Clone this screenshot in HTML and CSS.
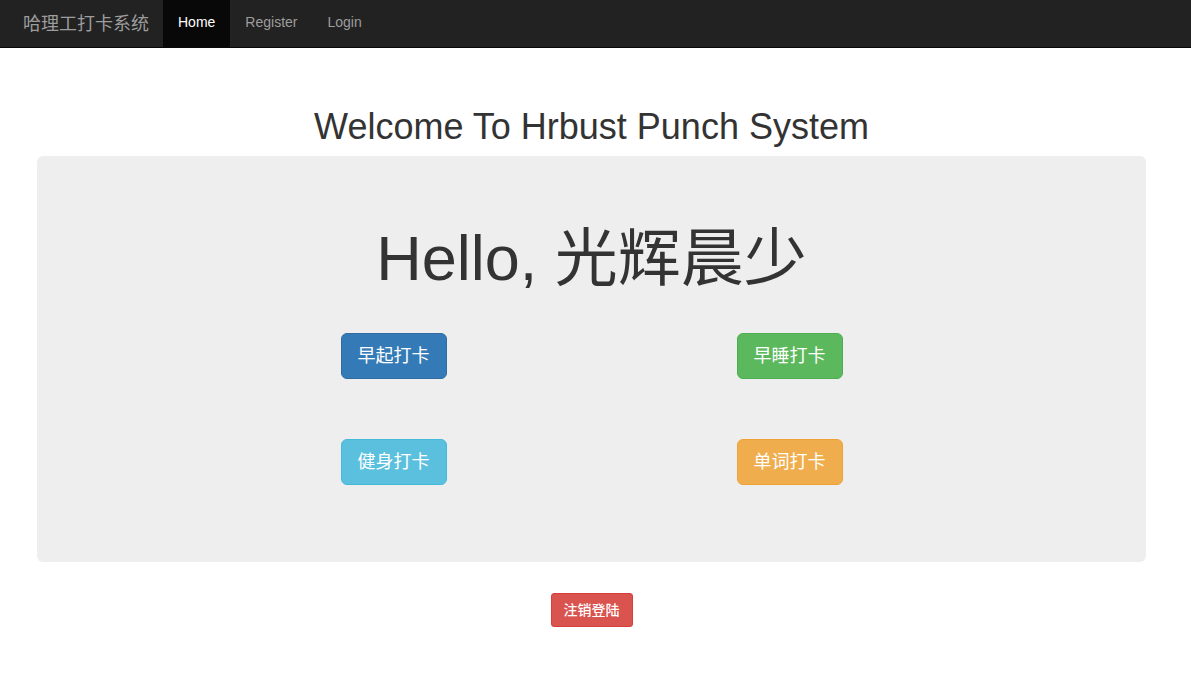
FILE: index.html
```html
<!DOCTYPE html>
<html lang="zh-CN">
<head>
<meta charset="utf-8">
<title>哈理工打卡系统</title>
<link rel="stylesheet" href="styles.css">
</head>
<body>
<nav class="navbar">
  <a class="brand" href="#">哈理工打卡系统</a>
  <ul class="nav">
    <li><a class="active" href="#">Home</a></li>
    <li><a href="#">Register</a></li>
    <li><a href="#">Login</a></li>
  </ul>
</nav>
<main class="container">
  <h1 class="title">Welcome To Hrbust Punch System</h1>
  <section class="jumbotron">
    <h1 class="hello">Hello, 光辉晨少</h1>
    <div class="grid">
      <div class="cell"><a class="btn btn-lg btn-primary" href="#">早起打卡</a></div>
      <div class="cell"><a class="btn btn-lg btn-success" href="#">早睡打卡</a></div>
      <div class="cell"><a class="btn btn-lg btn-info" href="#">健身打卡</a></div>
      <div class="cell"><a class="btn btn-lg btn-warning" href="#">单词打卡</a></div>
    </div>
  </section>
  <div class="logout">
    <a class="btn btn-sm btn-danger" href="#">注销登陆</a>
  </div>
</main>
</body>
</html>
```
FILE: styles.css
```css
* { box-sizing: border-box; }
html, body { margin: 0; padding: 0; }
body {
  font-family: "Liberation Sans", Arial, "Noto Sans CJK SC", sans-serif;
  font-size: 14px;
  line-height: 20px;
  color: #333;
  background: #fff;
}
a { text-decoration: none; }

.navbar {
  display: flex;
  align-items: stretch;
  height: 48px;
  background: #222;
  border-bottom: 1px solid #080808;
  padding-left: 8px;
}
.brand {
  display: flex;
  align-items: center;
  padding: 0 14px 0 15px;
  font-size: 18px;
  color: #9d9d9d;
}
.nav {
  display: flex;
  list-style: none;
  margin: 0;
  padding: 0;
}
.nav li { display: flex; }
.nav a {
  display: flex;
  align-items: center;
  padding: 0 15px 3px;
  color: #9d9d9d;
  font-size: 14px;
}
.nav a.active {
  background: #080808;
  color: #fff;
}

.container {
  width: 1109px;
  margin: 0 0 0 37px;
}
.title {
  margin: 59px 0 9px;
  font-size: 36px;
  font-weight: 400;
  line-height: 39.6px;
  text-align: center;
  color: #333;
}
.jumbotron {
  background: #eee;
  border-radius: 6px;
  padding: 48px 0 77px;
  height: 406px;
}
.hello {
  margin: 20px 0 40px;
  font-size: 63px;
  font-weight: 400;
  line-height: 69px;
  text-align: center;
}
.grid {
  display: grid;
  grid-template-columns: 396px 396px;
  justify-content: center;
  row-gap: 60px;
}
.cell {
  display: flex;
  justify-content: center;
}
.btn {
  display: inline-block;
  border: 1px solid transparent;
  color: #fff;
  text-align: center;
  white-space: nowrap;
}
.btn-lg {
  padding: 10px 16px;
  font-size: 18px;
  line-height: 24px;
  border-radius: 6px;
}
.btn-sm {
  padding: 6px 12px;
  font-size: 14px;
  line-height: 20px;
  font-weight: 500;
  border-radius: 3px;
}
.btn-primary { background: #337ab7; border-color: #2e6da4; }
.btn-success { background: #5cb85c; border-color: #4cae4c; }
.btn-info { background: #5bc0de; border-color: #46b8da; }
.btn-warning { background: #f0ad4e; border-color: #eea236; }
.btn-danger { background: #d9534f; border-color: #d43f3a; }

.logout {
  display: flex;
  justify-content: center;
  margin-top: 31px;
}
```
